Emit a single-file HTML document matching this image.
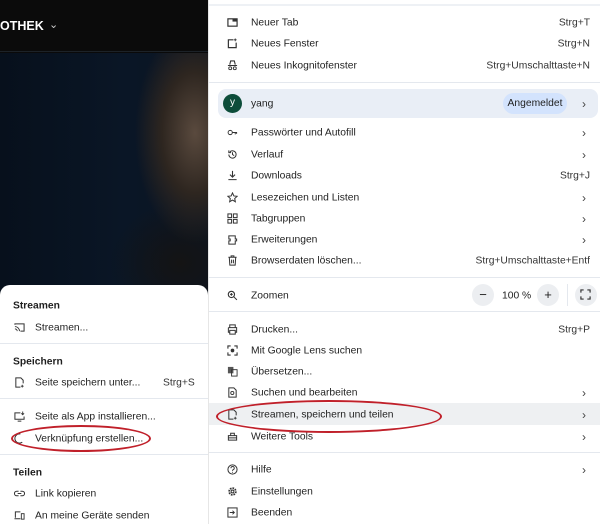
<!DOCTYPE html>
<html><head><meta charset="utf-8"><style>
*{margin:0;padding:0;box-sizing:border-box}
body{width:600px;height:524px;overflow:hidden;position:relative;font-family:"Liberation Sans",sans-serif;font-size:10.3px;color:#1f1f1f;background:#0a0a0a}
.a{position:absolute;white-space:nowrap}
.top{left:0;top:0;width:208px;height:52px;background:#0b0b0b;border-bottom:1px solid #1c2228}
.img{left:0;top:53px;width:208px;height:240px;background:radial-gradient(ellipse 60px 110px at 195px 80px,#5a4a3e 0%,#2e2620 55%,transparent 100%),radial-gradient(ellipse 70px 60px at 180px 210px,#141414,transparent),linear-gradient(90deg,#07101c,#0a1626 60%,#0c1522)}
.menu{left:208px;top:0;width:392px;height:524px;background:#fff;border-left:1px solid #e6e6e6}
.sub{left:0;top:285px;width:208px;height:239px;background:#fff;border-radius:10px 10px 0 0}
.sep{position:absolute;height:1px;background:#e4e8ee}
.t{position:absolute;white-space:nowrap;line-height:14px;transform:translateY(1.5px)}
.ic{position:absolute;width:11px;height:11px}
.h{font-weight:bold}
.chev{position:absolute;left:582px;color:#444;font-size:12px;line-height:14px;transform:translateY(1px)}
.sc{position:absolute;right:10px;white-space:nowrap;line-height:14px;color:#333;transform:translateY(1.5px)}
</style></head><body>
<div class="a top"></div>
<div class="a img"></div>
<div class="a" style="left:0;top:19px;color:#fff;font-weight:bold;font-size:12.5px">OTHEK</div>
<div class="a" style="left:49px;top:18px;color:#ccc;font-size:11px">&#8964;</div>

<div class="a menu"></div>
<div class="sep" style="left:209px;top:4px;width:391px;background:#eef1f5;height:2px"></div>
<svg class="ic" style="left:227px;top:17px" viewBox="0 0 12 12"><rect x="1" y="2" width="10" height="8" fill="none" stroke="#333" stroke-width="1.3"/><rect x="6" y="2" width="5" height="3" fill="#333"/></svg>
<div class="t" style="left:251px;top:15px">Neuer Tab</div><div class="sc" style="top:15px">Strg+T</div>
<svg class="ic" style="left:227px;top:38px" viewBox="0 0 12 12"><path d="M7 2H1.5v8.5H10V5" fill="none" stroke="#333" stroke-width="1.3"/><path d="M9 0.5v3M7.5 2h3" stroke="#333"/></svg>
<div class="t" style="left:251px;top:36px">Neues Fenster</div><div class="sc" style="top:36px">Strg+N</div>
<svg class="ic" style="left:227px;top:60px" viewBox="0 0 12 12"><path d="M3 5l1-4h4l1 4M1 6h10" fill="none" stroke="#333" stroke-width="1.2"/><circle cx="3.5" cy="9" r="1.6" fill="none" stroke="#333"/><circle cx="8.5" cy="9" r="1.6" fill="none" stroke="#333"/></svg>
<div class="t" style="left:251px;top:58px">Neues Inkognitofenster</div><div class="sc" style="top:58px">Strg+Umschalttaste+N</div>
<div class="sep" style="left:209px;top:82px;width:391px"></div>

<div class="a" style="left:218px;top:89px;width:380px;height:29px;background:#e9eef6;border-radius:8px"></div>
<div class="a" style="left:223px;top:94px;width:19px;height:19px;border-radius:50%;background:#0d4d3a;color:#fff;font-size:10px;text-align:center;line-height:18px">y</div>
<div class="t" style="left:251px;top:96px">yang</div>
<div class="a" style="left:503px;top:93px;width:64px;height:21px;border-radius:11px;background:#d3e3fd;text-align:center;line-height:21px">Angemeldet</div>
<div class="chev" style="top:96px">&#8250;</div>

<svg class="ic" style="left:227px;top:127px" viewBox="0 0 12 12"><circle cx="3.5" cy="6" r="2.3" fill="none" stroke="#333"/><path d="M6 6h5M9 6v2M10.5 6v1.5" stroke="#333"/></svg>
<div class="t" style="left:251px;top:125px">Passwörter und Autofill</div><div class="chev" style="top:125px">&#8250;</div>
<svg class="ic" style="left:227px;top:149px" viewBox="0 0 12 12"><path d="M2 6a4 4 0 1 0 1.2-2.9M2 1.5v2.5h2.5M6 3.5V6l1.8 1.2" fill="none" stroke="#333" stroke-width="1.1"/></svg>
<div class="t" style="left:251px;top:147px">Verlauf</div><div class="chev" style="top:147px">&#8250;</div>
<svg class="ic" style="left:227px;top:170px" viewBox="0 0 12 12"><path d="M6 1v6.5M3.2 5L6 7.8 8.8 5M1.5 10.5h9" fill="none" stroke="#333" stroke-width="1.2"/></svg>
<div class="t" style="left:251px;top:168px">Downloads</div><div class="sc" style="top:168px">Strg+J</div>
<svg class="ic" style="left:227px;top:192px" viewBox="0 0 12 12"><path d="M6 1l1.5 3.3 3.5.4-2.6 2.4.7 3.5L6 8.8 2.9 10.6l.7-3.5L1 4.7l3.5-.4z" fill="none" stroke="#333" stroke-width="1.1"/></svg>
<div class="t" style="left:251px;top:190px">Lesezeichen und Listen</div><div class="chev" style="top:190px">&#8250;</div>
<svg class="ic" style="left:227px;top:213px" viewBox="0 0 12 12"><g fill="none" stroke="#333" stroke-width="1.1"><rect x="1" y="1" width="4" height="4"/><rect x="7" y="1" width="4" height="4"/><rect x="1" y="7" width="4" height="4"/><rect x="7" y="7" width="4" height="4"/></g></svg>
<div class="t" style="left:251px;top:211px">Tabgruppen</div><div class="chev" style="top:211px">&#8250;</div>
<svg class="ic" style="left:227px;top:234px" viewBox="0 0 12 12"><path d="M2 2h7v3.5h1.5v2H9V11H2V7.5h1.5v-2H2z" fill="none" stroke="#333" stroke-width="1.1"/></svg>
<div class="t" style="left:251px;top:232px">Erweiterungen</div><div class="chev" style="top:232px">&#8250;</div>
<svg class="ic" style="left:227px;top:255px" viewBox="0 0 12 12"><path d="M1.5 2.5h9M4.5 2.5V1h3v1.5M2.5 2.5l.6 8.5h5.8l.6-8.5M5 5v4M7 5v4" fill="none" stroke="#333" stroke-width="1.1"/></svg>
<div class="t" style="left:251px;top:253px">Browserdaten löschen...</div><div class="sc" style="top:253px">Strg+Umschalttaste+Entf</div>
<div class="sep" style="left:209px;top:277px;width:391px"></div>

<svg class="ic" style="left:227px;top:290px" viewBox="0 0 12 12"><circle cx="4.8" cy="4.8" r="3.4" fill="none" stroke="#333" stroke-width="1.2"/><path d="M7.3 7.3l3.5 3.5M3.3 4.8h3M4.8 3.3v3" stroke="#333" stroke-width="1.1"/></svg>
<div class="t" style="left:251px;top:288px">Zoomen</div>
<div class="a" style="left:472px;top:284px;width:22px;height:22px;border-radius:50%;background:#eceef1;text-align:center;line-height:21px;font-size:13px">&minus;</div>
<div class="t" style="left:502px;top:288px">100 %</div>
<div class="a" style="left:537px;top:284px;width:22px;height:22px;border-radius:50%;background:#eceef1;text-align:center;line-height:21px;font-size:13px">+</div>
<div class="a" style="left:567px;top:284px;width:1px;height:22px;background:#e4e8ee"></div>
<div class="a" style="left:575px;top:284px;width:22px;height:22px;border-radius:50%;background:#eceef1"></div>
<svg class="ic" style="left:580px;top:289px" viewBox="0 0 12 12"><path d="M1 4V1h3M8 1h3v3M11 8v3H8M4 11H1V8" fill="none" stroke="#333" stroke-width="1.3"/></svg>
<div class="sep" style="left:209px;top:311px;width:391px"></div>

<svg class="ic" style="left:227px;top:324px" viewBox="0 0 12 12"><path d="M3 4V1h6v3M1.5 4h9v5H9M3 9H1.5V4M3 7h6v4H3z" fill="none" stroke="#333" stroke-width="1.1"/></svg>
<div class="t" style="left:251px;top:322px">Drucken...</div><div class="sc" style="top:322px">Strg+P</div>
<svg class="ic" style="left:227px;top:345px" viewBox="0 0 12 12"><path d="M1 4V1h3M8 1h3v3M11 8v3H8M4 11H1V8" fill="none" stroke="#333" stroke-width="1.2"/><circle cx="6" cy="6" r="2" fill="#333"/></svg>
<div class="t" style="left:251px;top:343px">Mit Google Lens suchen</div>
<svg class="ic" style="left:227px;top:366px" viewBox="0 0 12 12"><rect x="1" y="1" width="6" height="7" fill="#555"/><rect x="5" y="4" width="6" height="7" fill="none" stroke="#333"/></svg>
<div class="t" style="left:251px;top:364px">Übersetzen...</div>
<svg class="ic" style="left:227px;top:387px" viewBox="0 0 12 12"><path d="M2 1h5.5L10 3.5V11H2z" fill="none" stroke="#333" stroke-width="1.1"/><circle cx="5.8" cy="6.5" r="1.7" fill="none" stroke="#333"/></svg>
<div class="t" style="left:251px;top:385px">Suchen und bearbeiten</div><div class="chev" style="top:385px">&#8250;</div>
<div class="a" style="left:209px;top:403px;width:391px;height:22px;background:#eef0f2"></div>
<svg class="ic" style="left:227px;top:409px" viewBox="0 0 12 12"><path d="M7 11H2V1h5.5L10 3.5V7" fill="none" stroke="#333" stroke-width="1.1"/><path d="M9 8.5v3M7.5 10h3" stroke="#333"/></svg>
<div class="t" style="left:251px;top:407px">Streamen, speichern und teilen</div><div class="chev" style="top:407px">&#8250;</div>
<svg class="ic" style="left:227px;top:431px" viewBox="0 0 12 12"><path d="M1.5 5h9v5h-9zM4 5V2.5h4V5M1.5 7.5h9" fill="none" stroke="#333" stroke-width="1.1"/></svg>
<div class="t" style="left:251px;top:429px">Weitere Tools</div><div class="chev" style="top:429px">&#8250;</div>
<div class="sep" style="left:209px;top:452px;width:391px"></div>

<svg class="ic" style="left:227px;top:464px" viewBox="0 0 12 12"><circle cx="6" cy="6" r="5" fill="none" stroke="#333" stroke-width="1.1"/><path d="M4.3 4.6a1.8 1.8 0 1 1 2.4 1.6c-.5.3-.7.6-.7 1.3" fill="none" stroke="#333"/><circle cx="6" cy="9" r=".6" fill="#333"/></svg>
<div class="t" style="left:251px;top:462px">Hilfe</div><div class="chev" style="top:462px">&#8250;</div>
<svg class="ic" style="left:227px;top:486px" viewBox="0 0 12 12"><circle cx="6" cy="6" r="3.6" fill="none" stroke="#333" stroke-width="2" stroke-dasharray="1.8 1"/><circle cx="6" cy="6" r="1.5" fill="none" stroke="#333"/></svg>
<div class="t" style="left:251px;top:484px">Einstellungen</div>
<svg class="ic" style="left:227px;top:507px" viewBox="0 0 12 12"><rect x="1" y="1" width="10" height="10" fill="none" stroke="#333" stroke-width="1.1"/><path d="M3 6h5M6 4l2 2-2 2" fill="none" stroke="#333"/></svg>
<div class="t" style="left:251px;top:505px">Beenden</div>

<div class="a sub"></div>
<div class="t h" style="left:13px;top:298px">Streamen</div>
<svg class="ic" style="left:14px;top:322px" viewBox="0 0 12 12"><path d="M1 3V2h10v8H7" fill="none" stroke="#333" stroke-width="1.1"/><path d="M1 5a5 5 0 0 1 5 5M1 7.5a2.5 2.5 0 0 1 2.5 2.5" fill="none" stroke="#333"/></svg>
<div class="t" style="left:35px;top:320px">Streamen...</div>
<div class="sep" style="left:0;top:343px;width:208px"></div>
<div class="t h" style="left:13px;top:354px">Speichern</div>
<svg class="ic" style="left:14px;top:377px" viewBox="0 0 12 12"><path d="M7 11H2V1h5.5L10 3.5V7" fill="none" stroke="#333" stroke-width="1.1"/><path d="M9 8.5v3M7.5 10h3" stroke="#333"/></svg>
<div class="t" style="left:35px;top:375px">Seite speichern unter...</div>
<div class="t" style="left:163px;top:375px;color:#333">Strg+S</div>
<div class="sep" style="left:0;top:398px;width:208px"></div>
<svg class="ic" style="left:14px;top:411px" viewBox="0 0 12 12"><path d="M7 2H1v7h10V6M4 11h4" fill="none" stroke="#333" stroke-width="1.1"/><path d="M9.5 0.5v3.5M8 2.5l1.5 1.5 1.5-1.5" fill="none" stroke="#333"/></svg>
<div class="t" style="left:35px;top:409px">Seite als App installieren...</div>
<svg class="ic" style="left:14px;top:433px" viewBox="0 0 12 12"><path d="M6 1a5 5 0 1 0 3 9" fill="none" stroke="#333" stroke-width="1.1"/><path d="M5 1l2 0" stroke="#333"/></svg>
<div class="t" style="left:35px;top:431px">Verknüpfung erstellen...</div>
<div class="sep" style="left:0;top:454px;width:208px"></div>
<div class="t h" style="left:13px;top:465px">Teilen</div>
<svg class="ic" style="left:14px;top:488px" viewBox="0 0 12 12"><path d="M5 3.5H3a2.5 2.5 0 0 0 0 5h2M7 3.5h2a2.5 2.5 0 0 1 0 5H7M4 6h4" fill="none" stroke="#333" stroke-width="1.1"/></svg>
<div class="t" style="left:35px;top:486px">Link kopieren</div>
<svg class="ic" style="left:14px;top:510px" viewBox="0 0 12 12"><path d="M7 2H1.5v6.5M0.5 9.5h6.5" fill="none" stroke="#333" stroke-width="1.1"/><rect x="8" y="4" width="3" height="6" fill="none" stroke="#333"/></svg>
<div class="t" style="left:35px;top:508px">An meine Geräte senden</div>

<div class="a" style="left:216px;top:400px;width:226px;height:33px;border:2.5px solid #c0202a;border-radius:50%"></div>
<div class="a" style="left:11px;top:425px;width:140px;height:27px;border:2.5px solid #c0202a;border-radius:50%"></div>
</body></html>
